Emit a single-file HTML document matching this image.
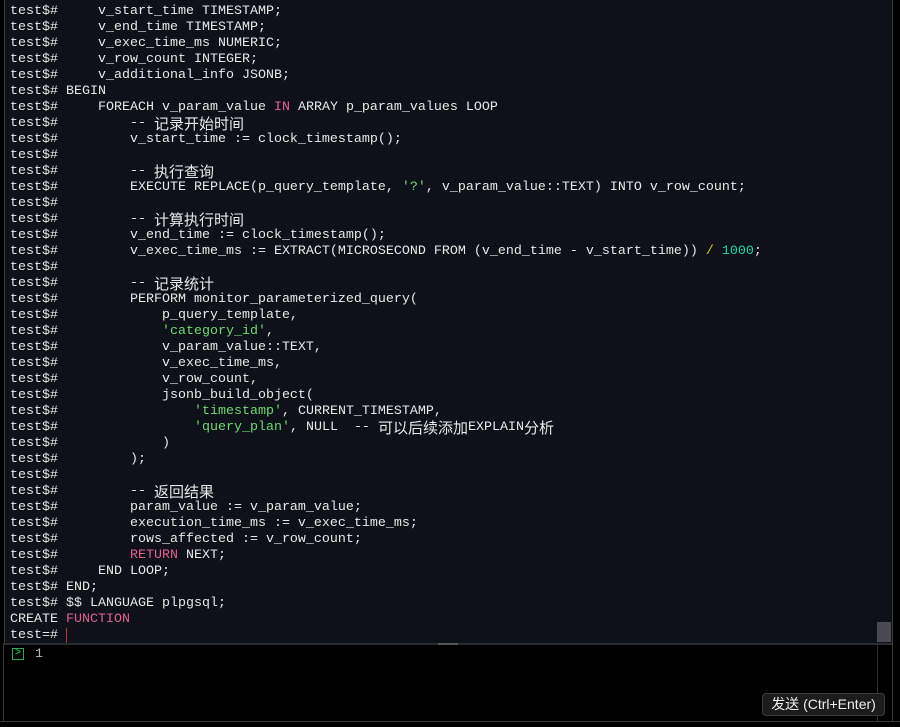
<!DOCTYPE html>
<html><head><meta charset="utf-8"><style>
html,body{margin:0;padding:0;background:#000;width:900px;height:727px;overflow:hidden}
.term{position:absolute;left:4px;top:0;width:888px;height:643px;background:#0e1119;border-left:1px solid #3a3a3a}
pre{position:absolute;left:10px;top:4px;margin:0;font-family:"Liberation Mono",monospace;font-size:13.33px;line-height:16px;color:#e8e8e8;white-space:pre}
.c{display:inline-block;height:16px;vertical-align:top;font-family:"Noto Sans CJK SC",sans-serif;font-size:15px;line-height:15px}
.k{color:#e2608e}.s{color:#6fd96f}.y{color:#e6c21a}.n{color:#1fd6a0}
.cur{display:inline-block;width:1px;height:15px;background:#c03040;vertical-align:top}
.div{position:absolute;left:4px;top:643px;width:888px;height:2px;background:#2a2c33}
.handle{position:absolute;left:438px;top:643px;width:20px;height:2px;background:#555}
.thumb{position:absolute;left:877px;top:622px;width:14px;height:20px;background:#4a4b52}
.rb{position:absolute;left:892px;top:0;width:1px;height:721px;background:#3a3a3a}
.lb{position:absolute;left:3px;top:643px;width:1px;height:78px;background:#3a3a3a}
.bb{position:absolute;left:0;top:721px;width:900px;height:1px;background:#3a3a3a}
.vb{position:absolute;left:877px;top:645px;width:1px;height:76px;background:#2e2e2e}
.icon{position:absolute;left:12px;top:648px;width:10px;height:10px;border:1px solid #2fa84f;color:#2fa84f;font:bold 10px/10px "Liberation Mono",monospace;text-align:center}
.one{position:absolute;left:35px;top:647px;font:13.33px/16px "Liberation Mono",monospace;color:#bbb}
.btn{position:absolute;left:762px;top:693px;width:123px;height:23px;background:#1c1c1c;border:1px solid #3c3c3c;border-radius:4px;box-sizing:border-box;color:#eee;font:14px/21px "Liberation Sans","Noto Sans CJK SC",sans-serif;text-align:center}
</style></head><body>
<div class="term"></div>
<pre>test$#     v_start_time TIMESTAMP;
test$#     v_end_time TIMESTAMP;
test$#     v_exec_time_ms NUMERIC;
test$#     v_row_count INTEGER;
test$#     v_additional_info JSONB;
test$# BEGIN
test$#     FOREACH v_param_value <span class="k">IN</span> ARRAY p_param_values LOOP
test$#         -- <span class="c">记录开始时间</span>
test$#         v_start_time := clock_timestamp();
test$#
test$#         -- <span class="c">执行查询</span>
test$#         EXECUTE REPLACE(p_query_template, <span class="s">'?'</span>, v_param_value::TEXT) INTO v_row_count;
test$#
test$#         -- <span class="c">计算执行时间</span>
test$#         v_end_time := clock_timestamp();
test$#         v_exec_time_ms := EXTRACT(MICROSECOND FROM (v_end_time - v_start_time)) <span class="y">/</span> <span class="n">1000</span>;
test$#
test$#         -- <span class="c">记录统计</span>
test$#         PERFORM monitor_parameterized_query(
test$#             p_query_template,
test$#             <span class="s">'category_id'</span>,
test$#             v_param_value::TEXT,
test$#             v_exec_time_ms,
test$#             v_row_count,
test$#             jsonb_build_object(
test$#                 <span class="s">'timestamp'</span>, CURRENT_TIMESTAMP,
test$#                 <span class="s">'query_plan'</span>, NULL  -- <span class="c">可以后续添加</span>EXPLAIN<span class="c">分析</span>
test$#             )
test$#         );
test$#
test$#         -- <span class="c">返回结果</span>
test$#         param_value := v_param_value;
test$#         execution_time_ms := v_exec_time_ms;
test$#         rows_affected := v_row_count;
test$#         <span class="k">RETURN</span> NEXT;
test$#     END LOOP;
test$# END;
test$# $$ LANGUAGE plpgsql;
CREATE <span class="k">FUNCTION</span>
test=# <span class="cur"></span></pre>
<div class="thumb"></div>
<div class="div"></div>
<div class="handle"></div>
<div class="rb"></div><div class="lb"></div><div class="bb"></div><div class="vb"></div>
<div class="icon">&gt;</div>
<div class="one">1</div>
<div class="btn">发送 (Ctrl+Enter)</div>
</body></html>
